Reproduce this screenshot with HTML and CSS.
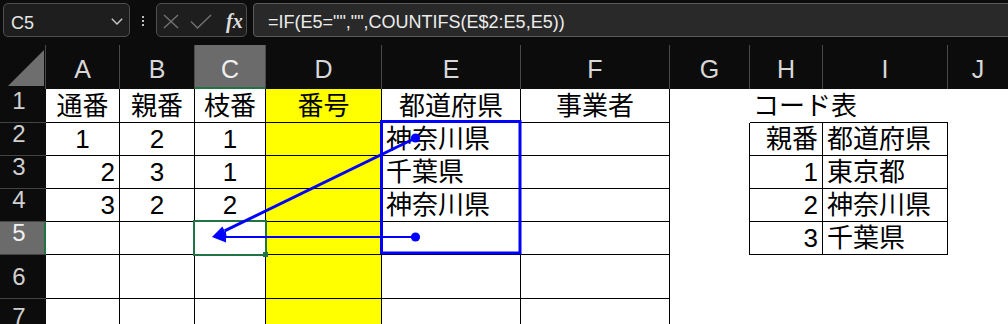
FILE: index.html
```html
<!DOCTYPE html>
<html lang="ja">
<head>
  <meta charset="UTF-8">
  <title>枝番 COUNTIFS</title>
  <link rel="stylesheet" href="styles.css">
</head>
<body>
  <div class="bar">
    <div class="namebox">
      <span class="ref">C5</span>
      <svg class="chev" width="12" height="7" viewBox="0 0 12 7"><polyline points="0.8,0.8 6,6 11.2,0.8" /></svg>
    </div>
    <svg class="grip" width="2" height="10" viewBox="0 0 2 10"><rect x="0" y="0" width="2" height="2"/><rect x="0" y="4" width="2" height="2"/><rect x="0" y="8" width="2" height="2"/></svg>
    <div class="fxbox">
      <svg class="ico x" width="16" height="15" viewBox="0 0 16 15"><line x1="1" y1="1" x2="15" y2="14"/><line x1="15" y1="1" x2="1" y2="14"/></svg>
      <svg class="ico ok" width="22" height="15" viewBox="0 0 22 15"><polyline points="1,7.5 7.5,14 21,1"/></svg>
      <span class="fx">fx</span>
    </div>
    <div class="formula">=IF(E5="","",COUNTIFS(E$2:E5,E5))</div>
  </div>

  <div class="sheet">
    <!-- header -->
    <div class="corner"></div>
    <div class="colhead">A</div>
    <div class="colhead">B</div>
    <div class="colhead sel">C</div>
    <div class="colhead">D</div>
    <div class="colhead">E</div>
    <div class="colhead">F</div>
    <div class="colhead">G</div>
    <div class="colhead">H</div>
    <div class="colhead">I</div>
    <div class="colhead last">J</div>

    <!-- 1 -->
    <div class="rowhead">1</div>
    <div class="c g ctr">通番</div>
    <div class="c g ctr">親番</div>
    <div class="c g ctr">枝番</div>
    <div class="c g ctr y">番号</div>
    <div class="c g ctr">都道府県</div>
    <div class="c g ctr">事業者</div>
    <div class="c"></div>
    <div class="c tb-top">コード表</div>
    <div class="c tb-top"></div>
    <div class="c"></div>

    <!-- 2 -->
    <div class="rowhead">2</div>
    <div class="c g ctr">1</div>
    <div class="c g ctr">2</div>
    <div class="c g ctr">1</div>
    <div class="c g y"></div>
    <div class="c g">神奈川県</div>
    <div class="c g"></div>
    <div class="c tb-left"></div>
    <div class="c tb rt">親番</div>
    <div class="c tb">都道府県</div>
    <div class="c"></div>

    <!-- 3 -->
    <div class="rowhead">3</div>
    <div class="c g rt">2</div>
    <div class="c g ctr">3</div>
    <div class="c g ctr">1</div>
    <div class="c g y"></div>
    <div class="c g">千葉県</div>
    <div class="c g"></div>
    <div class="c tb-left"></div>
    <div class="c tb rt">1</div>
    <div class="c tb">東京都</div>
    <div class="c"></div>

    <!-- 4 -->
    <div class="rowhead">4</div>
    <div class="c g rt">3</div>
    <div class="c g ctr">2</div>
    <div class="c g ctr">2</div>
    <div class="c g y"></div>
    <div class="c g">神奈川県</div>
    <div class="c g"></div>
    <div class="c tb-left"></div>
    <div class="c tb rt">2</div>
    <div class="c tb">神奈川県</div>
    <div class="c"></div>

    <!-- 5 -->
    <div class="rowhead sel">5</div>
    <div class="c g"></div>
    <div class="c g"></div>
    <div class="c g cur"></div>
    <div class="c g y"></div>
    <div class="c g"></div>
    <div class="c g"></div>
    <div class="c tb-left"></div>
    <div class="c tb rt">3</div>
    <div class="c tb">千葉県</div>
    <div class="c"></div>

    <!-- 6 -->
    <div class="rowhead">6</div>
    <div class="c g"></div>
    <div class="c g"></div>
    <div class="c g"></div>
    <div class="c g y"></div>
    <div class="c g"></div>
    <div class="c g"></div>
    <div class="c"></div>
    <div class="c"></div>
    <div class="c"></div>
    <div class="c"></div>

    <!-- 7 -->
    <div class="rowhead">7</div>
    <div class="c g"></div>
    <div class="c g"></div>
    <div class="c g"></div>
    <div class="c g y"></div>
    <div class="c g"></div>
    <div class="c g"></div>
    <div class="c"></div>
    <div class="c"></div>
    <div class="c"></div>
    <div class="c"></div>
  </div>

  <!-- トレース矢印 -->
  <svg class="trace" width="1008" height="324" viewBox="0 0 1008 324">
    <rect x="381.5" y="121.5" width="138.5" height="131.5" fill="none" stroke="#0000ff" stroke-width="3"/>
    <line x1="415.5" y1="138" x2="224.6" y2="230.9" stroke="#0000ff" stroke-width="3"/>
    <polygon points="212,237 226.8,235.4 222.4,226.4" fill="#0000ff"/>
    <line x1="415.5" y1="237" x2="225" y2="237" stroke="#0000ff" stroke-width="2"/>
    <polygon points="212,237 226,231.5 226,242.5" fill="#0000ff"/>
    <circle cx="415.5" cy="138" r="4.6" fill="#0000ff"/>
    <circle cx="415.5" cy="237" r="4.6" fill="#0000ff"/>
  </svg>
</body>
</html>
```

FILE: styles.css
```css
html, body {
  margin: 0;
  padding: 0;
}
body {
  width: 1008px;
  height: 324px;
  overflow: hidden;
  position: relative;
  background: #0c0c0c;
  font-family: 'Liberation Sans', 'Noto Sans CJK JP', sans-serif;
}

/* 数式バー */
.bar {
  display: flex;
  align-items: flex-start;
  height: 45px;
  box-sizing: border-box;
  padding: 3px 0 0 3px;
}
.namebox {
  display: flex;
  align-items: center;
  justify-content: space-between;
  width: 127px;
  height: 34px;
  box-sizing: border-box;
  padding: 0 6px 0 7px;
  border: 1px solid #4e4e4e;
  border-radius: 5px;
  background: #1e1e1e;
}
.ref {
  font-size: 18px;
  line-height: 20px;
  padding-top: 5px;
  color: #e6e6e6;
}
.chev {
  margin-top: 3px;
  fill: none;
  stroke: #c8c8c8;
  stroke-width: 1.4;
}
.grip {
  margin: 13px 0 0 12px;
  fill: #bdbdbd;
}
.fxbox {
  display: flex;
  align-items: center;
  width: 91px;
  height: 34px;
  box-sizing: border-box;
  margin-left: 12px;
  padding: 2px 0 0 6px;
  border: 1px solid #4e4e4e;
  border-radius: 5px;
  background: #1e1e1e;
}
.ico {
  fill: none;
  stroke: #727272;
  stroke-width: 1.4;
}
.ok {
  margin-left: 11px;
}
.fx {
  margin-left: 14px;
  font-family: 'Liberation Serif', serif;
  font-style: italic;
  font-weight: bold;
  font-size: 20px;
  line-height: 20px;
  color: #dedede;
}
.formula {
  flex: 1;
  height: 34px;
  box-sizing: border-box;
  margin: 0 -10px 0 6px;
  padding: 7px 0 0 14px;
  border: 1px solid #5c5c5c;
  border-radius: 4px 0 0 4px;
  background: #292929;
  color: #ececec;
  font-size: 18px;
  line-height: 22px;
  white-space: nowrap;
}

/* シート */
.sheet {
  display: grid;
  grid-template-columns: 46px 74px 75px 71px 116px 139px 149px 80px 73px 125px 60px;
  grid-template-rows: 44px 34px 33px 33px 33px 33px 44px 40px;
  background: #fff;
}
.corner {
  position: relative;
  background: #0c0c0c;
  border-right: 1px solid #4a4a4a;
}
.corner::after {
  content: "";
  position: absolute;
  left: 8px;
  top: 5px;
  width: 36px;
  height: 36px;
  background: #6e6e6e;
  clip-path: polygon(100% 0, 100% 100%, 0 100%);
}
.colhead {
  display: flex;
  align-items: flex-end;
  justify-content: center;
  box-sizing: border-box;
  padding-bottom: 6px;
  background: #0c0c0c;
  border-right: 1px solid #4a4a4a;
  color: #d8d8d8;
  font-size: 25px;
  line-height: 28px;
}
.colhead.last {
  border-right: none;
}
.colhead.sel {
  background: #6b6b6b;
  color: #f0f0f0;
  box-shadow: inset 0 -2px #217346;
}
.rowhead {
  display: flex;
  align-items: flex-end;
  justify-content: center;
  box-sizing: border-box;
  padding: 0 8px 7px 0;
  background: #0c0c0c;
  border-bottom: 1px solid #444;
  color: #d0d0d0;
  font-size: 24px;
  line-height: 28px;
}
.rowhead.sel {
  background: #6b6b6b;
  color: #f0f0f0;
  box-shadow: inset -2px 0 #217346;
}

.c {
  display: flex;
  align-items: flex-end;
  box-sizing: border-box;
  padding: 0 4px 2px 4px;
  color: #000;
  font-size: 26px;
  line-height: 28px;
  white-space: nowrap;
}
.g {
  border-right: 1px solid #000;
  border-bottom: 1px solid #000;
}
.ctr { justify-content: center; }
.rt { justify-content: flex-end; }
.y { background: #ffff00; }

.tb-top {
  padding-left: 3px;
  border-bottom: 1px solid #000;
}
.tb-left {
  border-right: 1px solid #000;
}
.tb {
  border-right: 1px solid #000;
  border-bottom: 1px solid #000;
}

/* アクティブセル */
.cur {
  position: relative;
}
.cur::before {
  content: "";
  position: absolute;
  left: -2px;
  top: -2px;
  right: -2px;
  bottom: -2px;
  border: 2px solid #217346;
}
.cur::after {
  content: "";
  position: absolute;
  right: -3px;
  bottom: -3px;
  width: 5px;
  height: 5px;
  background: #217346;
}

.trace {
  position: absolute;
  left: 0;
  top: 0;
  pointer-events: none;
}
```
